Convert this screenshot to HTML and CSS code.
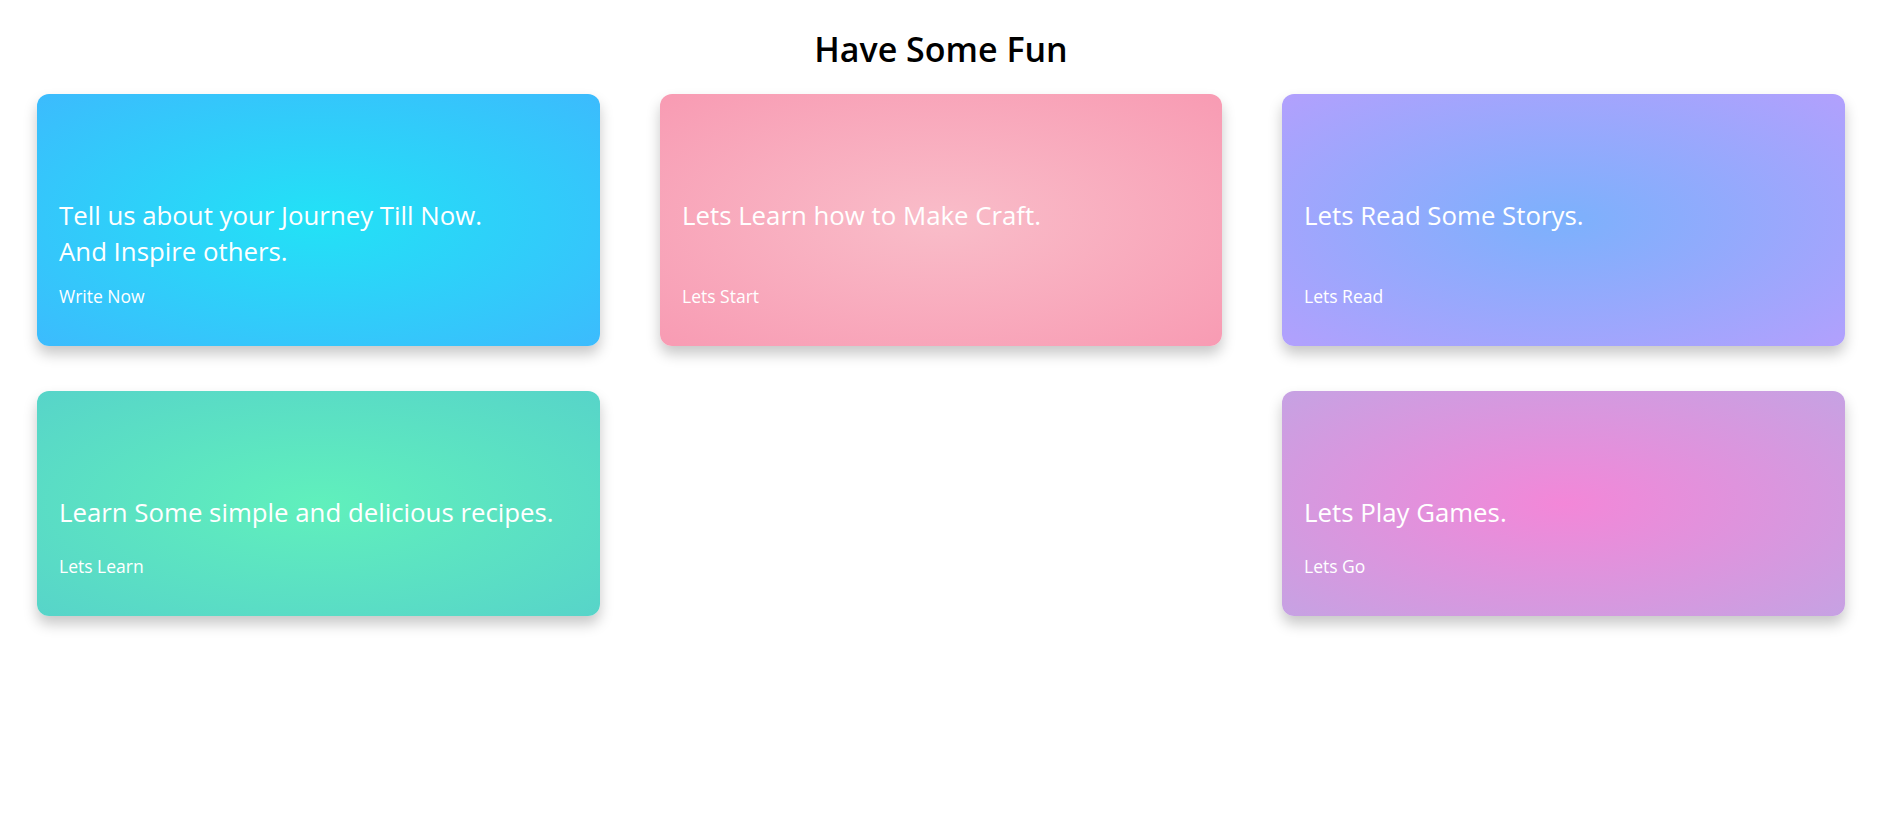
FILE: index.html
```html
<!DOCTYPE html>
<html lang="en">
<head>
<meta charset="utf-8">
<title>Have Some Fun</title>
<link rel="stylesheet" href="styles.css">
</head>
<body>
<main class="page">
  <h1 class="heading">Have Some Fun</h1>
  <div class="grid">
    <div class="card card-blue">
      <h3 class="card-title">Tell us about your Journey Till Now.<br>And Inspire others.</h3>
      <a class="card-link" href="#">Write Now</a>
    </div>
    <div class="card card-pink">
      <h3 class="card-title">Lets Learn how to Make Craft.</h3>
      <a class="card-link" href="#">Lets Start</a>
    </div>
    <div class="card card-violet">
      <h3 class="card-title">Lets Read Some Storys.</h3>
      <a class="card-link" href="#">Lets Read</a>
    </div>
    <div class="card card-green">
      <h3 class="card-title">Learn Some simple and delicious recipes.</h3>
      <a class="card-link" href="#">Lets Learn</a>
    </div>
    <div class="spacer"></div>
    <div class="card card-purple">
      <h3 class="card-title">Lets Play Games.</h3>
      <a class="card-link" href="#">Lets Go</a>
    </div>
  </div>
</main>
</body>
</html>
```
FILE: styles.css
```css
* { box-sizing: border-box; }

html, body {
  margin: 0;
  padding: 0;
  background: #ffffff;
}

body {
  font-family: "Open Sans", "Noto Sans", "Liberation Sans", sans-serif;
  color: #000;
}

.page {
  padding: 0 47px 120px 37px;
}

.heading {
  margin: 0;
  padding-top: 26px;
  height: 94px;
  text-align: center;
  font-size: 34px;
  line-height: 46px;
  font-weight: 600;
}

.grid {
  display: grid;
  grid-template-columns: 563px 562px 563px;
  column-gap: 60px;
  row-gap: 45px;
}

.card {
  display: flex;
  flex-direction: column;
  min-height: 225px;
  padding: 103px 22px 38px 22px;
  border-radius: 12px;
  color: #fff;
  box-shadow: 0 8px 14px rgba(0, 0, 0, 0.22);
}

.card-title {
  margin: 0;
  font-size: 25.8px;
  line-height: 36px;
  font-weight: 400;
}

.card-link {
  margin-top: auto;
  padding-top: 15px;
  color: #fff;
  text-decoration: none;
  font-size: 17.5px;
  line-height: 24px;
}

.card-blue   { background: radial-gradient(ellipse at center, #22e2f6 0%, #3cbbfd 100%); }
.card-pink   { background: radial-gradient(ellipse at center, #f9bdc9 0%, #f89bb3 100%); }
.card-violet { background: radial-gradient(ellipse at center, #7cb1fc 0%, #b2a0fd 100%); }
.card-green  { background: radial-gradient(ellipse at center, #60f0bc 0%, #57d4c9 100%); }
.card-purple { background: radial-gradient(ellipse at center, #f387d8 0%, #c6a2e3 100%); }
```
